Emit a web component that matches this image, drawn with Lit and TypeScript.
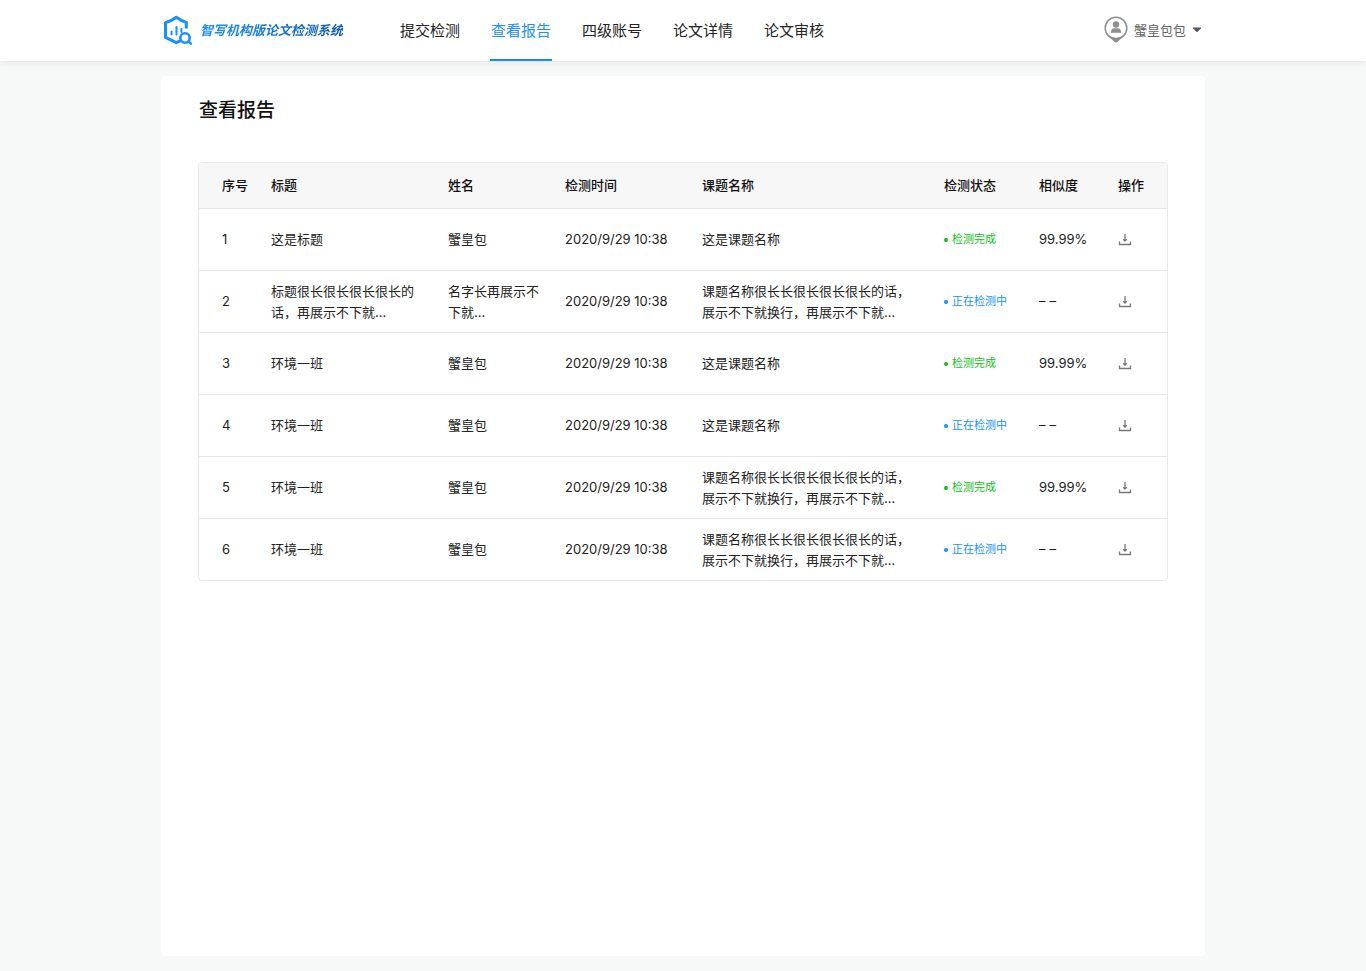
import { LitElement, html, css, svg } from "lit";
import { customElement, property } from "lit/decorators.js";
import { classMap } from "lit/directives/class-map.js";

interface Report {
  title: string;
  name: string;
  time: string;
  topic: string;
  done: boolean;
}

const TIME = "2020/9/29 10:38";
const LONG_TOPIC = "课题名称很长长很长很长很长的话，展示不下就换行，再展示不下就…";

const REPORTS: Report[] = [
  { title: "这是标题", name: "蟹皇包", time: TIME, topic: "这是课题名称", done: true },
  { title: "标题很长很长很长很长的话，再展示不下就…", name: "名字长再展示不下就…", time: TIME, topic: LONG_TOPIC, done: false },
  { title: "环境一班", name: "蟹皇包", time: TIME, topic: "这是课题名称", done: true },
  { title: "环境一班", name: "蟹皇包", time: TIME, topic: "这是课题名称", done: false },
  { title: "环境一班", name: "蟹皇包", time: TIME, topic: LONG_TOPIC, done: true },
  { title: "环境一班", name: "蟹皇包", time: TIME, topic: LONG_TOPIC, done: false },
];

const NAV = ["提交检测", "查看报告", "四级账号", "论文详情", "论文审核"];

@customElement("site-header")
class SiteHeader extends LitElement {
  static styles = css`
    :host {
      display: block;
      background: #fff;
      box-shadow: 0 1px 6px rgba(0, 21, 41, 0.1);
    }
    .bar {
      display: flex;
      align-items: center;
      box-sizing: border-box;
      max-width: 1044px;
      height: 61px;
      margin: 0 auto;
      padding: 0 3px 0 2px;
    }
    .brand {
      display: flex;
      align-items: center;
      gap: 7px;
      padding-bottom: 2px;
      text-decoration: none;
    }
    .brand-name {
      font-size: 13px;
      font-weight: 700;
      font-style: italic;
      white-space: nowrap;
      color: transparent;
      background: linear-gradient(90deg, #1890ff, #0a58b0);
      background-clip: text;
      -webkit-background-clip: text;
    }
    .nav {
      display: flex;
      align-self: stretch;
      gap: 29px;
      margin-left: 56px;
    }
    .link {
      display: flex;
      align-items: center;
      padding: 0 1px;
      border-bottom: 2px solid transparent;
      font-size: 15px;
      white-space: nowrap;
      color: #222;
      text-decoration: none;
    }
    .link.active {
      color: #1890ff;
      border-bottom-color: #1687f5;
    }
    .user {
      display: flex;
      align-items: center;
      gap: 6px;
      margin-left: auto;
      padding: 0 0 2px;
      border: 0;
      background: none;
      font: inherit;
      font-size: 13px;
      color: #666;
      cursor: pointer;
    }
    svg {
      display: block;
      flex: none;
    }
  `;

  render() {
    return html`
      <header class="bar">
        <a class="brand" href="#">
          <svg width="30" height="31" viewBox="0 0 30 31" fill="none" stroke="#1890ff">
            <path stroke-width="3" stroke-linejoin="round" d="M23.3 14.5V8.4Q18.5 7 13.3 3.2Q8.5 7 2.5 8.6V23.4L13.3 28.7L17.5 26.7" />
            <path stroke-width="2" stroke-linecap="round" d="M8.5 17.5V20.500M13.5 13V20.500M18.4 15V18" />
            <circle cx="22" cy="24" r="4.7" stroke-width="2.6" fill="#fff" />
            <path stroke-width="2.6" stroke-linecap="round" d="M25.8 27.8L27.8 29.6" />
          </svg>
          <span class="brand-name">智写机构版论文检测系统</span>
        </a>
        <nav class="nav">
          ${NAV.map((label, i) => html`<a class=${classMap({ link: true, active: i === 1 })} href="#">${label}</a>`)}
        </nav>
        <button class="user" type="button">
          <svg width="24" height="27" viewBox="0 0 24 27">
            <circle cx="12" cy="12" r="10.8" fill="#fff" stroke="#8f8f8f" stroke-width="1.5" />
            <path fill="#8f8f8f" d="M4 19.8Q12 24 20 19.8L13.4 25.900Q12 27 10.600 25.900Z" />
            <circle cx="12" cy="8.5" r="3.2" fill="#8f8f8f" />
            <path fill="#8f8f8f" d="M7 16.7V15.5Q7.2 12.300 10.5 12.200H13.5Q16.8 12.300 17 15.5V16.7Z" />
          </svg>
          <span>蟹皇包包</span>
          <svg width="10" height="6" viewBox="0 0 10 6"><path fill="#555" d="M1.2 0.5H8.8Q9.4 0.7 9 1.2L5.6 4.8Q5 5.4 4.4 4.8L1 1.2Q0.6 0.7 1.2 0.5Z" /></svg>
        </button>
      </header>
    `;
  }
}

const downloadIcon = svg`
  <path d="M1.500 7.500V10.500H12.500V7.500" />
  <path d="M7 0V7M5.200 5.200L7 7L8.800 5.200" />
`;

@customElement("report-table")
class ReportTable extends LitElement {
  @property({ attribute: false }) rows: Report[] = [];

  static styles = css`
    :host {
      display: block;
      border: 1px solid #e9e9e9;
      border-radius: 4px;
      overflow: hidden;
    }
    .table {
      width: 100%;
      table-layout: fixed;
      border-collapse: separate;
      border-spacing: 0;
      font-size: 13px;
      line-height: 21px;
      color: #222;
    }
    .head {
      box-sizing: border-box;
      height: 46px;
      padding: 0;
      border-bottom: 1px solid #e9e9e9;
      background: #f7f7f7;
      font-weight: 500;
      text-align: left;
      color: #111;
    }
    .cell {
      box-sizing: border-box;
      height: 62px;
      padding: 0 24px 0 0;
      border-bottom: 1px solid #e9e9e9;
      vertical-align: middle;
    }
    .row:last-child .cell {
      height: 61px;
      border-bottom: 0;
    }
    .index {
      width: 72px;
      padding-left: 23px;
      padding-right: 0;
    }
    .title { width: 177px; }
    .name { width: 117px; }
    .time { width: 137px; }
    .topic { width: 242px; }
    .state { width: 95px; }
    .score { width: 79px; }
    .time, .state, .score, .action {
      padding-right: 0;
      white-space: nowrap;
    }
    .status {
      display: flex;
      align-items: center;
      gap: 4px;
      font-size: 11px;
      color: #1890ff;
    }
    .status.done {
      color: #0fbf18;
    }
    .dot {
      width: 4px;
      height: 4px;
      border-radius: 50%;
      background: currentColor;
    }
    .none {
      display: flex;
      gap: 4px;
    }
    .download {
      display: flex;
      padding: 0;
      border: 0;
      background: none;
      color: #777;
      cursor: pointer;
    }
  `;

  render() {
    return html`
      <table class="table">
        <thead>
          <tr>
            <th class="head index">序号</th>
            <th class="head title">标题</th>
            <th class="head name">姓名</th>
            <th class="head time">检测时间</th>
            <th class="head topic">课题名称</th>
            <th class="head state">检测状态</th>
            <th class="head score">相似度</th>
            <th class="head action">操作</th>
          </tr>
        </thead>
        <tbody>
          ${this.rows.map(
            (row, i) => html`
              <tr class="row">
                <td class="cell index">${i + 1}</td>
                <td class="cell title">${row.title}</td>
                <td class="cell name">${row.name}</td>
                <td class="cell time">${row.time}</td>
                <td class="cell topic">${row.topic}</td>
                <td class="cell state">
                  <span class=${classMap({ status: true, done: row.done })}>
                    <i class="dot"></i>${row.done ? "检测完成" : "正在检测中"}
                  </span>
                </td>
                <td class="cell score">
                  ${row.done ? "99.99%" : html`<span class="none"><span>–</span><span>–</span></span>`}
                </td>
                <td class="cell action">
                  <button class="download" type="button" aria-label="下载">
                    <svg width="14" height="12" viewBox="0 0 14 12" fill="none" stroke="currentColor" stroke-width="1.3">${downloadIcon}</svg>
                  </button>
                </td>
              </tr>
            `
          )}
        </tbody>
      </table>
    `;
  }
}

@customElement("app-root")
class AppRoot extends LitElement {
  static styles = css`
    :host {
      display: flex;
      flex-direction: column;
      min-height: 100vh;
      background: #f7f9f9;
      font-family: Inter, "Noto Sans CJK SC", sans-serif;
    }
    .page {
      flex: 1;
      box-sizing: border-box;
      width: 100%;
      max-width: 1044px;
      margin: 15px auto;
      padding: 21px 37px;
      border-radius: 4px;
      background: #fff;
    }
    .heading {
      margin: 0 0 37px;
      padding-left: 1px;
      font-size: 19px;
      line-height: 28px;
      font-weight: 500;
      color: #111;
    }
  `;

  render() {
    return html`
      <site-header></site-header>
      <main class="page">
        <h1 class="heading">查看报告</h1>
        <report-table .rows=${REPORTS}></report-table>
      </main>
    `;
  }
}
